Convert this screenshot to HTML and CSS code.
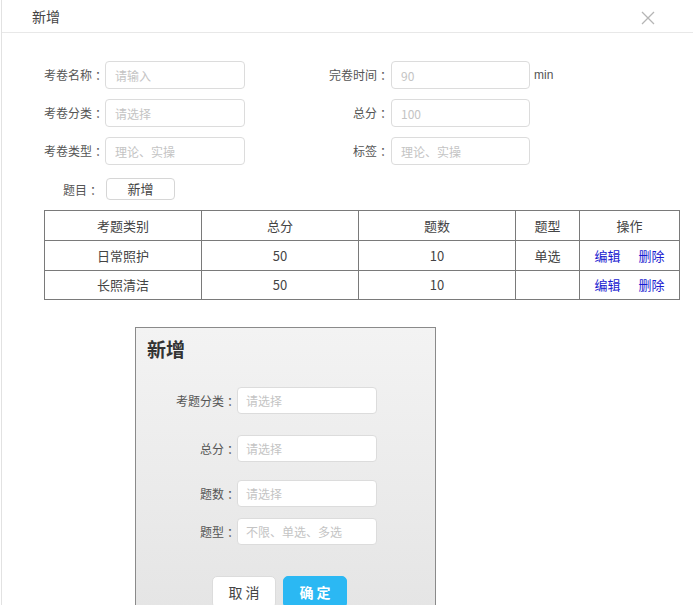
FILE: index.html
```html
<!DOCTYPE html>
<html lang="zh">
<head>
<meta charset="utf-8">
<title>新增</title>
<link rel="stylesheet" href="styles.css">
</head>
<body>
<div class="modal">
  <div class="modal-header">
    <span class="modal-title">新增</span>
    <span class="close" aria-label="关闭">
      <svg width="14" height="14" viewBox="0 0 14 14"><path d="M1 1 L13 13 M13 1 L1 13" stroke="#b5b5b5" stroke-width="1.3" fill="none"/></svg>
    </span>
  </div>
  <div class="modal-body">
    <div class="form-grid">
      <label class="lbl">考卷名称<span class="colon">：</span></label>
      <div class="field"><input class="ipt" placeholder="请输入"></div>
      <label class="lbl lbl2">完卷时间<span class="colon">：</span></label>
      <div class="field"><input class="ipt ipt2" placeholder="90"><span class="unit">min</span></div>

      <label class="lbl">考卷分类<span class="colon">：</span></label>
      <div class="field"><input class="ipt" placeholder="请选择"></div>
      <label class="lbl lbl2">总分<span class="colon">：</span></label>
      <div class="field"><input class="ipt ipt2" placeholder="100"></div>

      <label class="lbl">考卷类型<span class="colon">：</span></label>
      <div class="field"><input class="ipt" placeholder="理论、实操"></div>
      <label class="lbl lbl2">标签<span class="colon">：</span></label>
      <div class="field"><input class="ipt ipt2" placeholder="理论、实操"></div>
    </div>

    <div class="topic-row">
      <span class="topic-lbl">题目<span class="colon">：</span></span>
      <button class="btn-add">新增</button>
    </div>

    <table class="tbl">
      <colgroup>
        <col class="c1"><col class="c2"><col class="c3"><col class="c4"><col class="c5">
      </colgroup>
      <tr class="head"><td>考题类别</td><td>总分</td><td>题数</td><td>题型</td><td>操作</td></tr>
      <tr class="r1"><td>日常照护</td><td>50</td><td>10</td><td>单选</td><td><a class="lnk">编辑</a><a class="lnk">删除</a></td></tr>
      <tr class="r2"><td>长照清洁</td><td>50</td><td>10</td><td></td><td><a class="lnk">编辑</a><a class="lnk">删除</a></td></tr>
    </table>

    <div class="dialog">
      <div class="dlg-title">新增</div>
      <div class="dlg-row r-a"><label class="dlg-lbl">考题分类<span class="colon">：</span></label><input class="dlg-ipt" placeholder="请选择"></div>
      <div class="dlg-row r-b"><label class="dlg-lbl">总分<span class="colon">：</span></label><input class="dlg-ipt" placeholder="请选择"></div>
      <div class="dlg-row r-c"><label class="dlg-lbl">题数<span class="colon">：</span></label><input class="dlg-ipt" placeholder="请选择"></div>
      <div class="dlg-row r-d"><label class="dlg-lbl">题型<span class="colon">：</span></label><input class="dlg-ipt" placeholder="不限、单选、多选"></div>
      <div class="dlg-btns">
        <button class="btn-cancel">取 消</button>
        <button class="btn-ok">确 定</button>
      </div>
    </div>
  </div>
</div>
</body>
</html>
```

FILE: styles.css
```css
* { box-sizing: border-box; }
html, body { margin: 0; padding: 0; background: #fff; }
body {
  font-family: "Noto Sans CJK SC", "Noto Sans", sans-serif;
  font-size: 12px;
  color: #555;
  width: 693px;
  height: 605px;
  overflow: hidden;
}
.colon {
  display: inline-block;
  width: 12px;
  text-align: center;
  font-feature-settings: "palt" 1;
}
.modal {
  margin-left: 1px;
  border-left: 1px solid #e2e2e2;
  height: 605px;
}
.modal-header {
  height: 33px;
  border-bottom: 1px solid #e8e8e8;
  display: flex;
  align-items: center;
  justify-content: space-between;
  padding: 0 38px 0 30px;
}
.modal-title { font-size: 14px; color: #444; line-height: 20px; }
.close { display: flex; margin-top: 4px; }

.modal-body { padding: 28px 0 0 0; }

.form-grid {
  display: grid;
  grid-template-columns: 102px 140px 145px auto;
  row-gap: 10px;
  align-items: center;
}
.lbl { text-align: right; line-height: 28px; color: #555; font-size: 12px; }
.field { display: flex; align-items: center; }
.ipt {
  width: 140px;
  height: 28px;
  margin-left: 1px;
  border: 1px solid #dcdcdc;
  border-radius: 4px;
  padding: 0 9px;
  font-family: inherit;
  font-size: 12px;
  color: #555;
  outline: none;
  background: #fff;
}
.ipt2 { width: 139px; margin-left: 2px; }
.ipt::placeholder, .dlg-ipt::placeholder { color: #c4c4c4; }
.unit { margin-left: 4px; font-size: 12px; color: #555; font-family: "Liberation Sans", "Noto Sans CJK SC", sans-serif; }

.topic-row {
  display: flex;
  align-items: center;
  margin-top: 13px;
  padding-left: 61px;
  height: 22px;
}
.topic-lbl { font-size: 12px; color: #555; width: 43px; }
.btn-add {
  width: 69px;
  height: 22px;
  border: 1px solid #d6d6d6;
  border-radius: 4px;
  background: #fff;
  font-family: inherit;
  font-size: 13px;
  color: #444;
  padding: 0;
  line-height: 20px;
}

.tbl {
  margin: 10px 0 0 42px;
  border-collapse: collapse;
  width: 635px;
  table-layout: fixed;
  font-size: 13px;
  color: #444;
}
.c1, .c2, .c3 { width: 157px; }
.c4 { width: 64px; }
.c5 { width: 100px; }
.tbl td {
  border: 1px solid #7a7a7a;
  text-align: center;
  padding: 0;
  line-height: 18px;
}
.tbl tr { height: 30px; }
.tbl tr.r2 { height: 29px; }
.lnk { color: #1a1ad0; margin: 0 9px; cursor: pointer; }

.dialog {
  margin: 27px 0 0 133px;
  width: 301px;
  height: 300px;
  border: 1px solid #8a8a8a;
  border-bottom: none;
  background: linear-gradient(#f3f3f3, #e4e4e4);
  padding: 10px 0 0 0;
}
.dlg-title {
  font-size: 19px;
  font-weight: bold;
  color: #333;
  line-height: 22px;
  padding-left: 11px;
}
.dlg-row { display: flex; align-items: center; }
.r-a { margin-top: 27px; }
.r-b { margin-top: 21px; }
.r-c { margin-top: 18px; }
.r-d { margin-top: 11px; }
.dlg-lbl { width: 100px; text-align: right; font-size: 12px; color: #555; line-height: 27px; margin-right: 1px; }
.dlg-ipt {
  width: 140px;
  height: 27px;
  border: 1px solid #dcdcdc;
  border-radius: 4px;
  background: #fff;
  padding: 0 8px;
  font-family: inherit;
  font-size: 12px;
  outline: none;
}
.dlg-btns {
  display: flex;
  gap: 7px;
  margin-top: 31px;
  padding-left: 76px;
}
.btn-cancel, .btn-ok {
  width: 64px;
  height: 32px;
  border-radius: 5px;
  font-family: inherit;
  font-size: 14px;
  padding: 0;
}
.btn-cancel { background: #fff; border: 1px solid #dcdcdc; color: #444; }
.btn-ok { background: #2bb8f3; border: 1px solid #2bb8f3; color: #fff; font-weight: bold; }
```
